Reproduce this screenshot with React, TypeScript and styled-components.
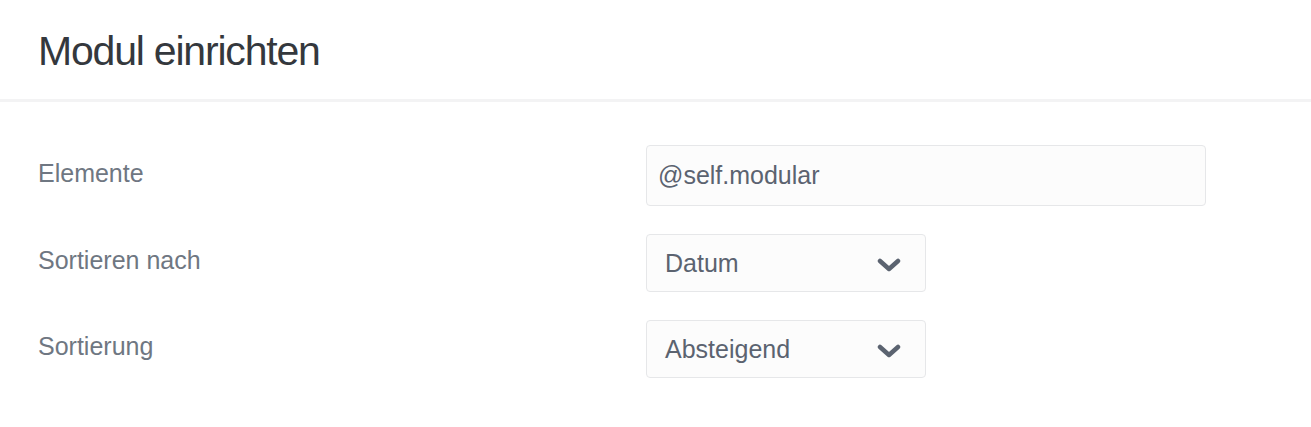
import styled, { createGlobalStyle } from "styled-components";

const GlobalStyle = createGlobalStyle`
  body {
    margin: 0;
    background-color: #ffffff;
    font-family: "Liberation Sans", Arial, sans-serif;
  }
`;

const StyledPage = styled.div`
  width: 1311px;
`;

const StyledHeader = styled.div`
  height: 102px;
  border-bottom: 3px solid #f3f3f4;
  padding: 0 38px;
  display: flex;
  align-items: center;
  box-sizing: border-box;
`;

const StyledH1 = styled.h1`
  margin: 0;
  font-size: 41px;
  font-weight: normal;
  letter-spacing: -1.2px;
  color: #34383d;
  padding-top: 4px;
`;

const StyledForm = styled.div`
  display: grid;
  grid-template-columns: 608px 560px;
  row-gap: 28px;
  padding: 43px 38px 0;
  align-items: center;
`;

const StyledLabel = styled.label`
  font-size: 25px;
  color: #6f7782;
  margin-top: -5px;
`;

const StyledInput = styled.input`
  box-sizing: border-box;
  width: 560px;
  height: 61px;
  padding: 0 11px;
  border: 1px solid #e6e7e9;
  border-radius: 4px;
  background-color: #fcfcfc;
  font-family: "Liberation Sans", Arial, sans-serif;
  font-size: 25px;
  color: #5b6370;
  outline: none;
`;

const StyledSelect = styled.div`
  box-sizing: border-box;
  width: 280px;
  height: 58px;
  padding: 0 24px 0 18px;
  border: 1px solid #e6e7e9;
  border-radius: 4px;
  background-color: #fcfcfc;
  display: flex;
  align-items: center;
  justify-content: space-between;
  font-size: 25px;
  color: #5b6370;
`;

const StyledChevron = styled.svg`
  width: 24px;
  height: 16px;
  margin-top: 4px;
`;

function Chevron() {
  return (
    <StyledChevron viewBox="0 0 24 16">
      <path
        d="M3 4 L12 12 L21 4"
        fill="none"
        stroke="#5b6370"
        strokeWidth="4.5"
        strokeLinecap="round"
        strokeLinejoin="round"
      />
    </StyledChevron>
  );
}

export default function App() {
  return (
    <StyledPage>
      <GlobalStyle />
      <StyledHeader>
        <StyledH1>Modul einrichten</StyledH1>
      </StyledHeader>
      <StyledForm>
        <StyledLabel>Elemente</StyledLabel>
        <StyledInput defaultValue="@self.modular" />
        <StyledLabel>Sortieren nach</StyledLabel>
        <StyledSelect>
          <span>Datum</span>
          <Chevron />
        </StyledSelect>
        <StyledLabel>Sortierung</StyledLabel>
        <StyledSelect>
          <span>Absteigend</span>
          <Chevron />
        </StyledSelect>
      </StyledForm>
    </StyledPage>
  );
}
